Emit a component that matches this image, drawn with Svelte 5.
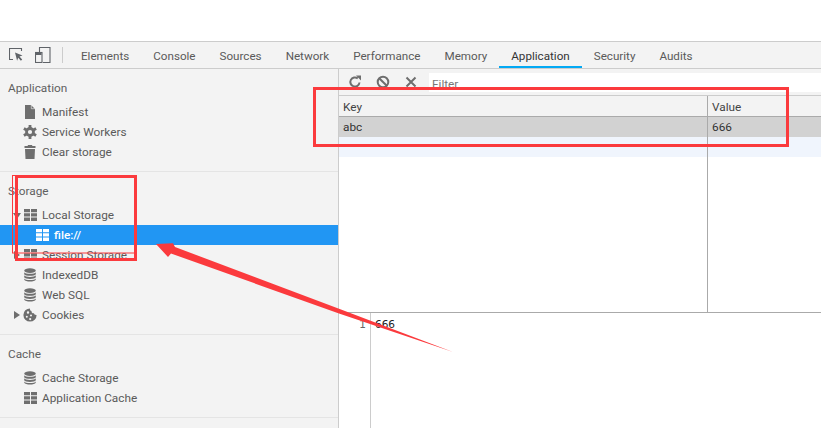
<script>
  const tabs = ['Elements','Console','Sources','Network','Performance','Memory','Application','Security','Audits'];
</script>

{#snippet icon(kind)}
  <svg class="ic" viewBox="0 0 14 14" width="14" height="14" aria-hidden="true">
    {#if kind === 'file'}
      <path d="M2 0h6l4 4v10H2z" fill="currentColor"/>
      <path d="M8.300 0v3.700H12" fill="none" stroke="#f3f3f3" stroke-width=".6"/>
    {:else if kind === 'gear'}
      <circle cx="7" cy="7" r="3.500" fill="none" stroke="currentColor" stroke-width="2.800"/>
      <path d="M7 0v3M7 11v3M.9 3.500l2.600 1.500M10.500 9l2.600 1.500M.9 10.500L3.500 9M10.500 5l2.600-1.500" stroke="currentColor" stroke-width="2.800"/>
    {:else if kind === 'trash'}
      <path d="M4.800 0h4.400v1h3.300v2h-11V1h3.300zM2 4h10l-.5 10h-9z" fill="currentColor"/>
    {:else if kind === 'grid'}
      <path d="M1 1h6v3.300H1zM8 1h6v3.300H8zM1 5.300h6v3.300H1zM8 5.300h6v3.300H8zM1 9.600h6v3.300H1zM8 9.600h6v3.300H8z" fill="currentColor"/>
    {:else if kind === 'db'}
      <ellipse cx="7" cy="2.600" rx="5.800" ry="2.300" fill="currentColor"/>
      <path d="M1.200 4.200c1 2.100 10.600 2.100 11.600 0v2c-1 2.100-10.600 2.100-11.600 0zM1.200 7.300c1 2.100 10.600 2.100 11.600 0v2c-1 2.100-10.600 2.100-11.600 0zM1.200 10.400c1 2.100 10.600 2.100 11.600 0v1c-1 2.700-10.600 2.700-11.600 0z" fill="currentColor"/>
    {:else if kind === 'cookie'}
      <path fill-rule="evenodd" d="M7 .4a6.600 6.600 0 1 0 6.600 6.600c-1.500.2-2.500-.6-2.600-1.700-1.500.2-2.700-.9-2.500-2.400C7.300 2.700 6.800 1.600 7 .4zM5 3.300a1.200 1.200 0 1 1 0 2.400 1.200 1.200 0 0 1 0-2.400zM3.800 7.800a1 1 0 1 1 0 2 1 1 0 0 1 0-2zM8 6.600a1 1 0 1 1 0 2 1 1 0 0 1 0-2zM7.200 10a1.100 1.100 0 1 1 0 2.200 1.100 1.100 0 0 1 0-2.200z" fill="currentColor"/>
    {/if}
  </svg>
{/snippet}

{#snippet row(kind, label, arrow)}
  <div class="row">
    <span class="arrow">
      {#if arrow === 'down'}<i class="tri down"></i>{:else if arrow === 'right'}<i class="tri right"></i>{/if}
    </span>
    {@render icon(kind)}
    <span class="lbl">{label}</span>
  </div>
{/snippet}

<div class="page">
  <div class="blank"></div>
  <div class="topbar">
    <div class="tools">
      <svg width="15" height="16" viewBox="0 0 15 16" fill="none" aria-hidden="true">
        <path d="M12.500 4V1.500H.5v11H4" stroke="#5f6368" stroke-width="1.100"/>
        <path d="M6 5.500l7.500 3-3 1.100 2.700 3-1.300 1.200-2.700-3-1.100 2.900z" fill="#5f6368"/>
      </svg>
      <svg width="16" height="16" viewBox="0 0 16 16" fill="none" aria-hidden="true">
        <path d="M4.500 5.500V.5h10.500v15H8" stroke="#5f6368" stroke-width="1.100"/>
        <rect x="0.500" y="5.500" width="6.500" height="10" stroke="#5f6368" stroke-width="1.100"/>
        <rect x="1" y="6" width="5.500" height="2" fill="#5f6368"/>
      </svg>
      <span class="sep"></span>
    </div>
    {#each tabs as t}
      <div class="tab" class:active={t === 'Application'}>{t}</div>
    {/each}
  </div>
  <div class="body">
    <aside class="side">
      <section class="sec">
        <h3>Application</h3>
        {@render row('file','Manifest')}
        {@render row('gear','Service Workers')}
        {@render row('trash','Clear storage')}
      </section>
      <section class="sec">
        <h3>Storage</h3>
        {@render row('grid','Local Storage','down')}
        <div class="row sel">
          <span class="arrow"></span>
          {@render icon('grid')}
          <span class="lbl">file://</span>
        </div>
        {@render row('grid','Session Storage','right')}
        {@render row('db','IndexedDB')}
        {@render row('db','Web SQL')}
        {@render row('cookie','Cookies','right')}
      </section>
      <section class="sec">
        <h3>Cache</h3>
        {@render row('db','Cache Storage')}
        {@render row('grid','Application Cache')}
      </section>
    </aside>
    <main class="main">
      <div class="filterbar">
        <svg width="14" height="14" viewBox="0 0 14 14" fill="none" aria-hidden="true">
          <path d="M11.500 7.500A4.600 4.600 0 1 1 9.800 3.400" stroke="#6e6e6e" stroke-width="2"/>
          <path d="M8 .5h5v5z" fill="#6e6e6e"/>
        </svg>
        <svg width="14" height="14" viewBox="0 0 14 14" fill="none" aria-hidden="true">
          <circle cx="7" cy="7" r="5.300" stroke="#6e6e6e" stroke-width="2"/>
          <path d="M3.200 3.200l7.600 7.600" stroke="#6e6e6e" stroke-width="2"/>
        </svg>
        <svg width="14" height="14" viewBox="0 0 14 14" fill="none" aria-hidden="true">
          <path d="M2.500 2.500l9 9M11.500 2.500l-9 9" stroke="#6e6e6e" stroke-width="2"/>
        </svg>
        <div class="filter">Filter</div>
      </div>
      <div class="table">
        <div class="tr head"><div class="c1">Key</div><div class="c2">Value</div></div>
        <div class="tr selrow"><div class="c1">abc</div><div class="c2">666</div></div>
        <div class="tr stripe"><div class="c1"></div><div class="c2"></div></div>
        <div class="tr fill"><div class="c1"></div><div class="c2"></div></div>
      </div>
      <div class="preview">
        <div class="gutter">1</div>
        <div class="code">666</div>
      </div>
    </main>
  </div>

  <svg class="marks" width="821" height="428" viewBox="0 0 821 428" fill="none" aria-hidden="true">
    <rect x="314.500" y="88.500" width="473" height="57" stroke="#fb3a3d" stroke-width="3"/>
    <rect x="16.500" y="176.500" width="119" height="83" stroke="#fb3a3d" stroke-width="3"/>
    <rect x="12.500" y="175.500" width="122" height="77.500" stroke="#fb3a3d" stroke-width="1"/>
    <path d="M453 352L341 309.500L175 247L173 243.300L156 244L168 257L171 253.500L339 313.500z" fill="#fb3a3d"/>
  </svg>
</div>

<style>
  :global(body) { margin: 0; }
  .page {
    position: relative;
    width: 821px;
    height: 428px;
    overflow: hidden;
    background: #fff;
    font-family: Roboto, "Open Sans", sans-serif;
    font-size: 11.8px;
    color: #5a5a5a;
    display: flex;
    flex-direction: column;
  }
  .blank { height: 41px; flex: none; }
  .topbar {
    flex: none;
    height: 26px;
    display: flex;
    align-items: stretch;
    background: #f3f3f3;
    border-top: 1px solid #ccc;
    border-bottom: 1px solid #ccc;
  }
  .tools {
    display: flex;
    align-items: center;
    width: 69px;
    flex: none;
    padding-left: 9px;
    gap: 11px;
    box-sizing: border-box;
  }
  .sep { width: 1px; height: 16px; background: #ccc; }
  .tab {
    padding: 0 12px;
    line-height: 28px;
    font-size: 11.65px;
    white-space: nowrap;
    color: #5a5a5a;
  }
  .tab.active {
    color: #333;
    box-shadow: inset 0 -2px 0 #03a9f4;
  }
  .body { flex: 1; display: flex; min-height: 0; }
  .side {
    width: 338px;
    flex: none;
    background: #f3f3f3;
    border-right: 1px solid #ccc;
  }
  .sec { border-bottom: 1px solid #e4e4e4; padding: 9px 0; }
  h3 {
    margin: 0 0 4px;
    font-size: 11.8px;
    font-weight: 400;
    line-height: 20px;
    padding-left: 8px;
    color: #5f5f5f;
  }
  .row {
    height: 20px;
    display: flex;
    align-items: center;
    white-space: nowrap;
    color: #5a5a5a;
  }
  .arrow { width: 23px; flex: none; position: relative; height: 20px; }
  .tri { position: absolute; width: 0; height: 0; }
  .tri.right {
    left: 14px; top: 6px;
    border-left: 6px solid #6e6e6e;
    border-top: 4px solid transparent;
    border-bottom: 4px solid transparent;
  }
  .tri.down {
    left: 13px; top: 8px;
    border-top: 6px solid #6e6e6e;
    border-left: 4px solid transparent;
    border-right: 4px solid transparent;
  }
  .ic { color: #6e6e6e; flex: none; }
  .lbl { margin-left: 5px; }
  .row.sel { background: #2196f3; color: #fff; }
  .row.sel .arrow { width: 35px; }
  .row.sel .ic { color: #fff; }
  .row.sel .lbl { font-weight: 500; color: #fff; }
  .main { flex: 1; min-width: 0; display: flex; flex-direction: column; }
  .filterbar {
    flex: none;
    height: 27px;
    display: flex;
    align-items: center;
    padding-left: 9px;
    gap: 14px;
    background: #f3f3f3;
    border-bottom: 1px solid #ccc;
    box-sizing: border-box;
  }
  .filter {
    flex: 1;
    margin-left: -3px;
    height: 19px;
    line-height: 23px;
    background: #fff;
    color: #777;
    padding-left: 3px;
    align-self: flex-start;
    margin-top: 4px;
  }
  .table { flex: 1; display: flex; flex-direction: column; min-height: 0; color: #333; }
  .tr { display: flex; flex: none; height: 20px; line-height: 20px; }
  .c1 { width: 369px; flex: none; padding-left: 4px; box-sizing: border-box; border-right: 1px solid #aaa; }
  .c2 { flex: 1; padding-left: 4px; }
  .head { background: #f3f3f3; border-bottom: 1px solid #aaa; height: 21px; line-height: 22px; box-sizing: border-box; color: #444; }
  .selrow { background: #d2d2d2; }
  .stripe { background: #f0f5fd; }
  .tr.fill { flex: 1; height: auto; }
  .preview {
    flex: none;
    height: 116px;
    display: flex;
    border-top: 1px solid #aaa;
    box-sizing: border-box;
    font-family: "DejaVu Sans", sans-serif;
    font-size: 10.5px;
    line-height: 22px;
  }
  .gutter {
    width: 32px;
    flex: none;
    box-sizing: border-box;
    border-right: 1px solid #ccc;
    text-align: right;
    padding-right: 4px;
    color: #666;
  }
  .code { padding-left: 4px; color: #222; }
  .marks { position: absolute; left: 0; top: 0; pointer-events: none; }
</style>
